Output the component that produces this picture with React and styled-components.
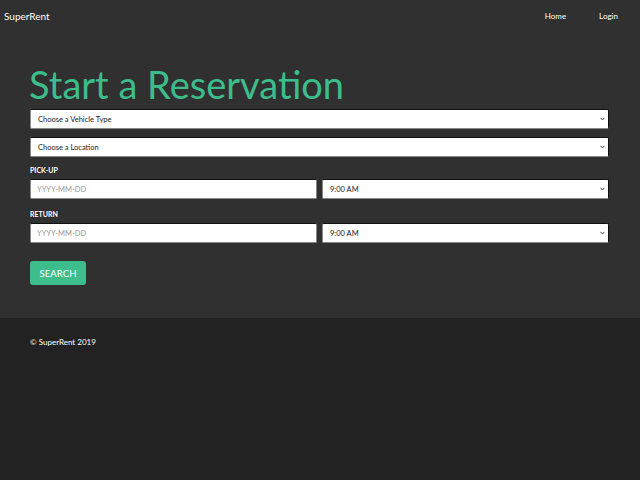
import React from 'react';
import styled, { createGlobalStyle } from 'styled-components';

const Global = createGlobalStyle`
    html, body {
        margin: 0;
        padding: 0;
        background: #222222;
        font-family: Lato, "Open Sans", sans-serif;
    }
    #root {
        min-height: 480px;
        background: #222222;
    }
`;

const green = '#3dbd8b';

const Hero = styled.section`
    background: #303030;
    height: 318px;
    box-sizing: border-box;
`;

const Nav = styled.nav`
    display: flex;
    align-items: center;
    justify-content: space-between;
    height: 32px;
    padding: 0 0 0 4px;
`;

const Brand = styled.a`
    color: #fff;
    font-size: 10px;
    text-decoration: none;
`;

const Links = styled.div`
    display: flex;
    align-items: center;
`;

const NavLink = styled.a`
    color: #fff;
    font-size: 8px;
    text-decoration: none;
    padding: 0 ${props => props.last ? '22px' : '33px'} 0 0;
`;

const Container = styled.div`
    padding: 0 31px 0 30px;
`;

const Title = styled.h1`
    color: ${green};
    font-size: 38px;
    font-weight: 400;
    line-height: 44px;
    margin: 30px 0 3px -1px;
`;

const Form = styled.form`
    display: flex;
    flex-direction: column;
`;

const SelectWrap = styled.div`
    position: relative;
    margin: 0 0 ${props => props.gap || 0}px;
`;

const Select = styled.select`
    box-sizing: border-box;
    display: block;
    width: 100%;
    height: 20px;
    padding: 0 0 0 7px;
    appearance: none;
    background: #fff;
    color: #222;
    border: 1px solid #888;
    border-top-color: #111;
    border-right-color: #111;
    border-radius: 2px;
    font-family: Lato, sans-serif;
    font-size: 7.5px;
`;

const Chevron = styled.svg`
    position: absolute;
    right: 4px;
    top: 8px;
    width: 5px;
    height: 4px;
    pointer-events: none;
`;

const Input = styled.input`
    box-sizing: border-box;
    width: 100%;
    height: 20px;
    padding: 0 0 0 6px;
    background: #fff;
    border: 1px solid #888;
    border-top-color: #111;
    border-radius: 2px;
    font-family: Lato, sans-serif;
    font-size: 7.5px;
    &::placeholder {
        color: #999;
    }
`;

const Label = styled.label`
    color: #fff;
    font-size: 7px;
    font-weight: 700;
    line-height: 10px;
    margin: 0 0 4px;
`;

const Row = styled.div`
    display: grid;
    grid-template-columns: 287px 1fr;
    gap: 5px;
    margin: 0 0 ${props => props.gap}px;
`;

const Button = styled.button`
    align-self: flex-start;
    width: 56px;
    height: 24px;
    background: ${green};
    color: #fff;
    border: none;
    border-radius: 3px;
    font-family: Lato, sans-serif;
    font-size: 9.5px;
    letter-spacing: 0.1px;
`;

const Footer = styled.footer`
    padding: 19px 30px;
    color: #fff;
    font-size: 8px;
`;

const times = ['9:00 AM', '9:30 AM', '10:00 AM'];

function Dropdown({ gap, children }) {
    return (
        <SelectWrap gap={gap}>
            <Select>{children}</Select>
            <Chevron viewBox="0 0 5 4">
                <path d="M0.5 0.8 L2.5 3 L4.5 0.8" fill="none" stroke="#555" strokeWidth="1" />
            </Chevron>
        </SelectWrap>
    );
}

export default function App() {
    return (
        <>
            <Global />
            <Hero>
                <Nav>
                    <Brand href="#">SuperRent</Brand>
                    <Links>
                        <NavLink href="#">Home</NavLink>
                        <NavLink href="#" last>Login</NavLink>
                    </Links>
                </Nav>
                <Container>
                    <Title>Start a Reservation</Title>
                    <Form>
                        <Dropdown gap={8}>
                            <option>Choose a Vehicle Type</option>
                        </Dropdown>
                        <Dropdown gap={8}>
                            <option>Choose a Location</option>
                        </Dropdown>
                        <Label>PICK-UP</Label>
                        <Row gap={10}>
                            <Input placeholder="YYYY-MM-DD" />
                            <Dropdown>
                                {times.map(t => <option key={t}>{t}</option>)}
                            </Dropdown>
                        </Row>
                        <Label>RETURN</Label>
                        <Row gap={18}>
                            <Input placeholder="YYYY-MM-DD" />
                            <Dropdown>
                                {times.map(t => <option key={t}>{t}</option>)}
                            </Dropdown>
                        </Row>
                        <Button type="button">SEARCH</Button>
                    </Form>
                </Container>
            </Hero>
            <Footer>© SuperRent 2019</Footer>
        </>
    );
}
